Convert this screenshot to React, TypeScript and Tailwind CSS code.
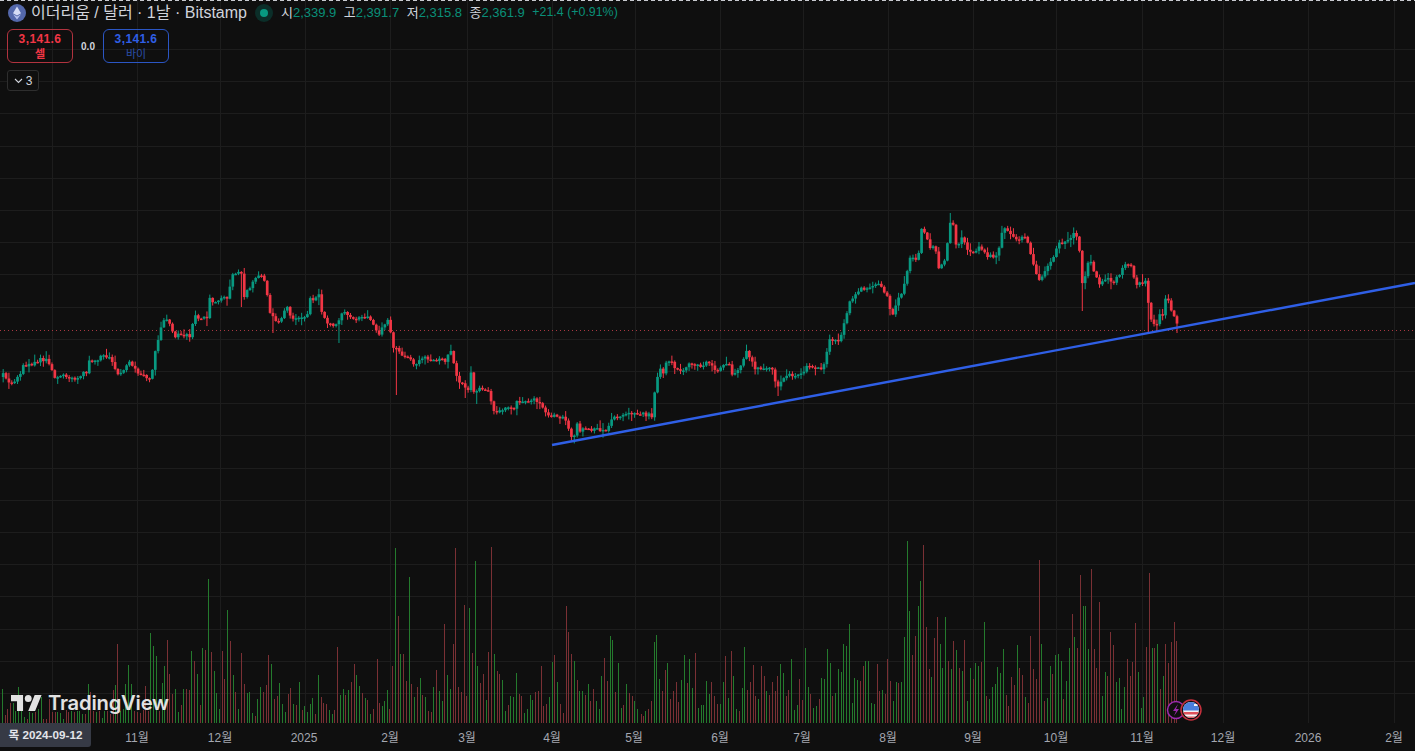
const gridX = [52, 137, 220, 305, 390, 467, 552, 635, 720, 803, 888, 973, 1056, 1142, 1223, 1308, 1394]
const gridY = Array.from({ length: 21 }, (_, k) => Math.round(49 + k * 32.2))

const axisLabels: [string, number][] = [
  ['11월', 137],
  ['12월', 220],
  ['2025', 304],
  ['2월', 390],
  ['3월', 467],
  ['4월', 552],
  ['5월', 634],
  ['6월', 720],
  ['7월', 802],
  ['8월', 888],
  ['9월', 973],
  ['10월', 1056],
  ['11월', 1142],
  ['12월', 1223],
  ['2026', 1308],
  ['2월', 1394],
]

// close price path, read off the picture as [x, y]
const path: [number, number][] = [
  [0, 377], [3, 375], [11, 384], [20, 375], [23, 366], [33, 363], [42, 359], [50, 363], [55, 378], [67, 376], [77, 378],
  [87, 372], [88, 363], [103, 357], [108, 357], [118, 373], [130, 363], [135, 370], [147, 377], [152, 377], [153, 357],
  [158, 340], [165, 315], [175, 335], [192, 335], [193, 317], [207, 318], [209, 297], [215, 302], [227, 298], [233, 274],
  [242, 274], [244, 298], [253, 280], [263, 275], [268, 300], [270, 312], [278, 323], [287, 307], [292, 318], [307, 317],
  [310, 300], [320, 295], [322, 313], [328, 325], [338, 323], [343, 310], [353, 320], [370, 318], [378, 335], [388, 320],
  [393, 347], [405, 358], [415, 363], [422, 358], [445, 360], [453, 350], [454, 370], [460, 383], [470, 390], [471, 370],
  [473, 393], [482, 388], [490, 393], [493, 412], [515, 408], [517, 400], [530, 403], [533, 398], [542, 405], [547, 415],
  [565, 417], [568, 430], [573, 438], [577, 425], [580, 433], [587, 427], [595, 430], [608, 430], [611, 418], [640, 413],
  [653, 416], [655, 390], [660, 367], [663, 372], [668, 360], [680, 372], [693, 362], [702, 368], [708, 360], [717, 370],
  [730, 363], [733, 377], [743, 360], [747, 352], [755, 367], [772, 370], [778, 388], [782, 378], [803, 372], [807, 365],
  [823, 368], [827, 350], [828, 340], [840, 342], [842, 330], [850, 300], [860, 290], [875, 285], [880, 285], [887, 295],
  [892, 315], [897, 300], [902, 295], [905, 280], [910, 258], [918, 260], [922, 227], [925, 233], [930, 248], [935, 245],
  [938, 270], [947, 260], [948, 222], [953, 223], [957, 250], [960, 237], [965, 243], [968, 250], [973, 253], [980, 245],
  [987, 257], [998, 255], [1003, 228], [1017, 242], [1023, 235], [1028, 243], [1032, 262], [1040, 283], [1043, 272],
  [1053, 260], [1058, 242], [1070, 242], [1072, 228], [1078, 242], [1080, 252], [1083, 290], [1087, 265], [1090, 258],
  [1097, 280], [1100, 285], [1107, 277], [1113, 285], [1125, 265], [1130, 265], [1137, 285], [1147, 282], [1148, 300],
  [1151, 317], [1156, 326], [1160, 312], [1163, 316], [1165, 298], [1170, 300], [1173, 322], [1175, 315], [1178, 328],
]

const longWicks: [number, number][] = [
  [241, 307], [272, 333], [339, 343], [395, 395], [464, 398], [476, 404], [778, 396], [951, 213], [1081, 311], [1149, 334], [1177, 333],
]

// x is in crop pixels (3x), height in page pixels
const volumeStrips: { left: number; bars: string }[] = [
  {
    left: 0,
    bars: '7g34 14r8 22r14 31r20 38g20 46g12 55g36 63g12 72g6 80r4 88g11 97g10 105r11 113g14 122g26 130r4 139r4 147r24 155r11 164r11 172g11 180g10 188g4 197r13 205r11 213g12 221r11 230g12 238g12 246g9 255r9 263g39 271r31 280r12 288g11 296r12 305g5 313g12 321r12 329r9 338r33 344g38 352r79 360g12 368g14 376g39 385g58 394g39 403r12 411r11 419r10 428r13 436r37 444r12 451g90 460g77 469g67 477r12 485g40 493g57 502r83 508r49 517r29 526g34 535g11 542r18 550g34 559r34 567r33 574g72 583r62 592g49 601r18 607g75 616r73 625g144 634r71 641g52 649g30 658g14 667r72 673r44 682g113 691r82 700g48 706r31 715g14 724r70 733r39 740g30 748g31 757g10 766r7 772g24 781g36 790r31 799r38 805r68 814g59 823r24 831r27 838g40 847g19 856g11 865r29 871r35 880g19 889r18 898g41 905r13 913g17 922g11 931g19 937g25 946r9 955g48 964r26 970r20 979r19 988g13 997g9 1003r13 1012r76 1021g28 1030g34 1036r28 1045g33 1054r41 1063r59 1069g48 1078g37 1087r30 1096g25 1102r23 1110g9 1120r14 1130r64 1136r20 1145g17 1153g22 1162g33 1168r14 1177r57 1186g175 1195r107',
  },
  {
    left: 380,
    bars: '61g69 70r69 79r42 88g146 94r39 103g26 112r36 121g45 127r28 136g26 145r12 154r11 160g36 169r53 178g32 187g22 193r99 202g48 211g34 220r79 226r175 235r36 244r31 253r118 259r27 268g115 277r70 286g162 292g57 301r40 310r49 319g23 325r71 334r176 343g69 352r52 358r49 367g43 376g12 385r18 391g27 400g26 409g50 418r29 424r27 433g10 442g14 451g28 457g23 466r31 475r32 484r57 490r17 499r19 508g26 517g61 523r68 532g41 541r19 550r10 559r117 565r91 574r69 583g62 592r43 598g32 607g32 616r28 625g39 631r22 640r34 649g22 658g14 664g47 673r65 682r42 691g87 697g83 706r31 715g60 724g15 730r18 739g39 748r30 757r27 763g22 772g14',
  },
  {
    left: 640,
    bars: '2r9 9r7 16g12 25r14 34r22 43g81 49g88 58g44 67r32 75r53 82g60 91r24 100r32 109r41 115r21 124g43 133g68 142r40 148g64 157g35 166r70 175g15 182g18 190g18 199g42 208g29 214r41 223r27 232r19 241g19 248g41 256r67 265g25 274r72 280g47 289g14 298r12 307g35 313g76 322r33 331r41 340r58 346r27 355g24 364r57 373r47 379g32 388r28 397r41 406r32 412r47 421g59 430g50 439r27 445r33 454g64 463g13 472g18 478r44 487r23 496g75 505g36 511r29 520g15 529g17 538r24 544g45 553g44 562g74 571g60 577r27 586g30 595g54 604g51 610g79 619g77 628g99 637g20 643g45 652g43 661r42 670r57 676g62 685g62 694g20 703g19 710r59 718r32 727g33 736r29 742r64 751r42 760g22 769g41 775r40 784g41 793g86 802g182 808g112',
  },
  {
    left: 910,
    bars: '7r68 16r87 25g117 31g142 40r178 49r96 58r54 64g46 73r85 82r106 91g79 97g55 106g106 115r62 124g54 130r82 139g73 148r55 157g52 163r83 172g22 181g55 190r44 196g60 205g57 214r61 223g101 229r27 238g24 247g36 256g39 262g56 271g50 280g74 289r28 295r17 304r46 313r38 322g78 328r55 337r48 346g26 355r20 361r87 370r54 379r44 388r163 394g79 403r22 412g25 421g57 427r49 436g68 445g69 454g62 460r24 469g42 478g75 487r109 493g86 502r75 511r148 520g117 526g117 535g74 544r154 553r74 559r55 568r121 577g27 586g51 592r47 601r91 610r78 619g41 628g45 634g14 643g36 652r64 661r47 667r61 676r100 685g51 694g15 700g26 709r76 718r150 727g75 733r75 742g79 751r34 760g47 766r79 775r60 784r81 793r101 799r82',
  },
]

const volumeBars = volumeStrips.flatMap((strip) =>
  strip.bars.split(' ').map((token) => {
    const [, zx, color, h] = token.match(/(\d+)([gr])(\d+)/) as RegExpMatchArray
    return { x: Math.round(strip.left + Number(zx) / 3), up: color === 'g', h: Number(h) }
  }),
)

function closeAt(x: number) {
  for (let i = 1; i < path.length; i++) {
    if (x <= path[i][0]) {
      const [x0, y0] = path[i - 1]
      const [x1, y1] = path[i]
      return y0 + ((y1 - y0) * (x - x0)) / (x1 - x0)
    }
  }
  return path[path.length - 1][1]
}

function buildCandles() {
  const count = 410
  const step = 2.87
  let seed = 4711
  const rnd = () => {
    seed = (seed * 16807) % 2147483647
    return seed / 2147483647
  }
  let open = closeAt(0)
  return Array.from({ length: count }, (_, i) => {
    const x = 1177 - (count - 1 - i) * step
    const close = closeAt(x) + (rnd() - 0.5) * 4.5
    let high = Math.min(open, close) - 0.5 - rnd() * rnd() * 8
    let low = Math.max(open, close) + 0.5 + rnd() * rnd() * 8
    for (const [wx, wy] of longWicks) {
      if (Math.abs(wx - x) <= step / 2) {
        if (wy < high) high = wy
        if (wy > low) low = wy
      }
    }
    const candle = { x, open, close, high, low }
    open = close
    return candle
  })
}

const candles = buildCandles()

function ChartCanvas() {
  return (
    <svg className="absolute inset-0 block" width={1415} height={723}>
      <g stroke="#1d1d1d" strokeWidth={1} shapeRendering="crispEdges">
        {gridX.map((x) => (
          <line key={x} x1={x + 0.5} x2={x + 0.5} y1={0} y2={723} />
        ))}
        {gridY.map((y) => (
          <line key={y} x1={0} x2={1415} y1={y + 0.5} y2={y + 0.5} />
        ))}
      </g>
      <g shapeRendering="crispEdges">
        {volumeBars.map((bar, i) => (
          <rect key={i} x={bar.x} y={723 - bar.h} width={1} height={bar.h} fill={bar.up ? '#247a2d' : '#7a3034'} />
        ))}
      </g>
      <line x1={0} x2={1415} y1={330.5} y2={330.5} stroke="#a83842" strokeWidth={1} strokeDasharray="1 3" />
      <g>
        {candles.map((c) => {
          const color = c.close <= c.open ? '#089981' : '#f23645'
          const top = Math.min(c.open, c.close)
          const height = Math.max(Math.abs(c.open - c.close), 1.5)
          return (
            <g key={c.x} fill={color}>
              <rect x={c.x - 0.5} y={c.high} width={1} height={c.low - c.high} />
              <rect x={c.x - 1.35} y={top} width={2.7} height={height} />
            </g>
          )
        })}
      </g>
      <line x1={552} y1={445} x2={1415} y2={283} stroke="#2f5fe6" strokeWidth={2.4} />
      <EventMarks />
    </svg>
  )
}

function EventMarks() {
  return (
    <g>
      <circle cx={1176} cy={710} r={8.5} fill="#0f0f0f" stroke="#9c2bb0" strokeWidth={1.5} />
      <path d="M1178 704l-5 7h3l-2 5 5-7h-3z" fill="#9c2bb0" />
      <clipPath id="flag-clip">
        <circle cx={1191} cy={710} r={8} />
      </clipPath>
      <circle cx={1191} cy={710} r={10} fill="#0f0f0f" stroke="#c4303c" strokeWidth={1.5} />
      <g clipPath="url(#flag-clip)">
        <rect x={1182} y={701} width={18} height={18} fill="#f4f4f4" />
        <rect x={1182} y={712} width={18} height={2.5} fill="#e0525a" />
        <rect x={1182} y={716.5} width={18} height={3} fill="#e0525a" />
        <rect x={1182} y={701} width={18} height={9.5} fill="#4a7fdc" />
        <rect x={1194} y={704} width={6} height={2} fill="#f4f4f4" />
      </g>
    </g>
  )
}

function Legend() {
  const values: [string, string][] = [
    ['시', '2,339.9'],
    ['고', '2,391.7'],
    ['저', '2,315.8'],
    ['종', '2,361.9'],
  ]
  return (
    <div className="absolute top-0 left-2 flex flex-col items-start">
      <div className="flex h-[25px] items-center">
        <svg width={18} height={18} viewBox="0 0 18 18" className="shrink-0">
          <circle cx={9} cy={9} r={9} fill="#5468ab" />
          <path d="M9 2.5L5 9.2 9 11.5l4-2.3z" fill="#d5dcf5" />
          <path d="M5 10.2L9 15.5l4-5.3-4 2.4z" fill="#b6c2ee" />
        </svg>
        <span className="ml-[5px] text-[16px] whitespace-nowrap text-[#d1d4dc]">이더리움 / 달러 · 1날 · Bitstamp</span>
        <span className="ml-[8px] flex h-[18px] w-[18px] items-center justify-center rounded-full bg-[#0b2e29]">
          <span className="h-2 w-2 rounded-full bg-[#089981]" />
        </span>
        <div className="ml-[8px] flex items-center text-[13px] whitespace-nowrap">
          {values.map(([label, value]) => (
            <span key={label} className="mr-[7.5px] flex">
              <span className="text-[#d1d4dc]">{label}</span>
              <span className="text-[#0a8f79]">{value}</span>
            </span>
          ))}
          <span className="text-[12.4px] text-[#0a8f79]">+21.4 (+0.91%)</span>
        </div>
      </div>
      <div className="-ml-px mt-[4px] flex items-center">
        <div className="flex h-[34px] w-[66px] flex-col items-center justify-center rounded-md border border-[#b2333f] text-[#f23645]">
          <span className="text-[12px] leading-[15px] font-bold tracking-[0.4px]">3,141.6</span>
          <span className="text-[11px] leading-[14px] font-bold">셀</span>
        </div>
        <span className="w-[30px] text-center text-[10px] font-bold text-[#d1d4dc]">0.0</span>
        <div className="flex h-[34px] w-[66px] flex-col items-center justify-center rounded-md border border-[#2b56c4] text-[#2f5fe6]">
          <span className="text-[12px] leading-[15px] font-bold tracking-[0.4px]">3,141.6</span>
          <span className="text-[11px] leading-[14px] text-[#2a4ea8]">바이</span>
        </div>
      </div>
      <div className="-ml-px mt-[7px] flex h-[21px] w-[32px] items-center justify-center gap-[3px] rounded-[3px] border border-[#2e2e2e] bg-[#0f0f0f] text-[12px] text-[#d1d4dc]">
        <svg width={9} height={6} viewBox="0 0 9 6" fill="none" stroke="#d1d4dc" strokeWidth={1.1}>
          <path d="M1 1l3.5 3.5L8 1" />
        </svg>
        3
      </div>
    </div>
  )
}

function Watermark() {
  return (
    <div className="absolute top-[691px] left-[11px] flex items-center gap-[6px] text-[#e2e2e2]">
      <svg width={31} height={16} viewBox="0 4 36 18" fill="currentColor" preserveAspectRatio="none">
        <path d="M14 22H7V11H0V4h14v18zM28 22h-8l7.5-18h8L28 22z" />
        <circle cx={20} cy={8} r={4} />
      </svg>
      <span className="text-[20.2px] leading-[24px] font-semibold tracking-[-0.2px] [font-family:Inter,sans-serif]">TradingView</span>
    </div>
  )
}

function TimeAxis() {
  return (
    <div className="relative h-[28px] text-[12px] text-[#a4a7b0]">
      {axisLabels.map(([label, x]) => (
        <span key={label + x} className="absolute top-[6px] -translate-x-1/2 whitespace-nowrap" style={{ left: x }}>
          {label}
        </span>
      ))}
      <div className="absolute top-0 left-0 flex h-[24px] w-[91px] items-center justify-center rounded-br-[3px] bg-[#363a45] text-[11.7px] font-bold text-[#e3e5ea]">
        목 2024-09-12
      </div>
    </div>
  )
}

export default function App() {
  return (
    <div className="flex h-[751px] w-[1415px] flex-col overflow-hidden bg-[#0f0f0f] [font-family:'Liberation_Sans','Noto_Sans_CJK_KR',sans-serif]">
      <div className="relative h-[723px]">
        <ChartCanvas />
        <div className="absolute top-0 left-0 h-px w-full bg-[repeating-linear-gradient(90deg,#c8cad0_0_4px,transparent_4px_7px)]" />
        <Legend />
        <Watermark />
      </div>
      <TimeAxis />
    </div>
  )
}
